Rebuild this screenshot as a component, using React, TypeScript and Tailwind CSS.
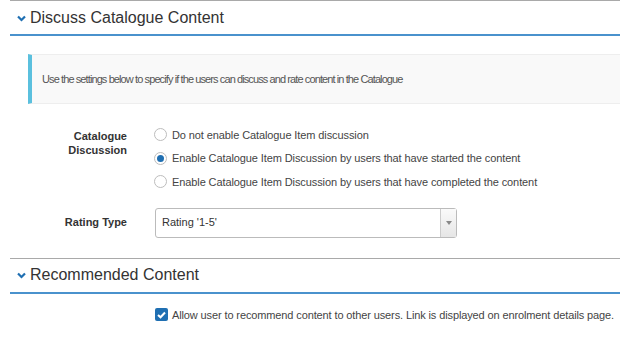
import React from "react";

const font = { fontFamily: '"Liberation Sans", Arial, sans-serif' };

function Chevron() {
  return (
    <svg width="9" height="7" viewBox="0 0 9 7" className="mr-[4px] mt-[1px]">
      <path d="M1 1.5 L4.5 5 L8 1.5" fill="none" stroke="#1f6fb2" strokeWidth="2.2" />
    </svg>
  );
}

function SectionHeader({ title }: { title: string }) {
  return (
    <div className="border-t border-[#a9a9a9] border-b-2 border-b-[#4a92cd] h-[36px] flex items-center pl-[7px]">
      <Chevron />
      <span className="text-[16px] text-[#333]">{title}</span>
    </div>
  );
}

function Radio({ checked, label }: { checked?: boolean; label: string }) {
  return (
    <div className="flex items-center h-[23.5px]">
      <span className="w-[13px] h-[13px] rounded-full border border-[#bdbdbd] bg-white flex items-center justify-center">
        {checked && <span className="w-[7px] h-[7px] rounded-full bg-[#1f6fb2]" />}
      </span>
      <span className="ml-[5px] text-[11px] text-[#444] tracking-[-0.1px] whitespace-nowrap">{label}</span>
    </div>
  );
}

export default function App() {
  return (
    <div className="w-[620px] h-[346px] bg-white overflow-hidden pl-[10px]" style={font}>
      <SectionHeader title="Discuss Catalogue Content" />

      <div className="mt-[18px] ml-[18px] h-[50px] bg-[#f9f9f9] border-y border-[#eee] border-l-4 border-l-[#5bc0de] flex items-center pl-[10px]">
        <span className="text-[11px] text-[#555] tracking-[-0.9px] whitespace-nowrap">
          Use the settings below to specify if the users can discuss and rate content in the Catalogue
        </span>
      </div>

      <div className="mt-[19px] flex">
        <div className="w-[117px] text-right text-[11px] font-bold text-[#333] leading-[14px] pt-[6px]">
          Catalogue
          <br />
          Discussion
        </div>
        <div className="ml-[27px] flex flex-col">
          <Radio label="Do not enable Catalogue Item discussion" />
          <Radio checked label="Enable Catalogue Item Discussion by users that have started the content" />
          <Radio label="Enable Catalogue Item Discussion by users that have completed the content" />
        </div>
      </div>

      <div className="mt-[14px] flex items-center">
        <div className="w-[117px] text-right text-[11px] font-bold text-[#333]">Rating Type</div>
        <div className="ml-[28px] w-[302px] h-[30px] border border-[#bbb] rounded-[3px] flex items-stretch bg-white">
          <div className="flex-1 flex items-center pl-[6px] text-[11px] text-[#333]">Rating '1-5'</div>
          <div className="w-[16px] border-l border-[#ccc] bg-gradient-to-b from-[#fafafa] to-[#e6e6e6] flex items-center justify-center">
            <svg width="6" height="4" viewBox="0 0 6 4">
              <path d="M0 0 L6 0 L3 4 Z" fill="#888" />
            </svg>
          </div>
        </div>
      </div>

      <div className="mt-[20px]">
        <SectionHeader title="Recommended Content" />
      </div>

      <div className="mt-[13px] ml-[145px] flex items-center">
        <span className="w-[13px] h-[13px] shrink-0 rounded-[2px] bg-[#1f6fb2] flex items-center justify-center">
          <svg width="9" height="8" viewBox="0 0 9 8">
            <path d="M1 4 L3.5 6.3 L8 1.5" fill="none" stroke="#fff" strokeWidth="2" />
          </svg>
        </span>
        <span className="ml-[4px] text-[11px] text-[#444] tracking-[-0.12px] whitespace-nowrap">
          Allow user to recommend content to other users. Link is displayed on enrolment details page.
        </span>
      </div>
    </div>
  );
}
